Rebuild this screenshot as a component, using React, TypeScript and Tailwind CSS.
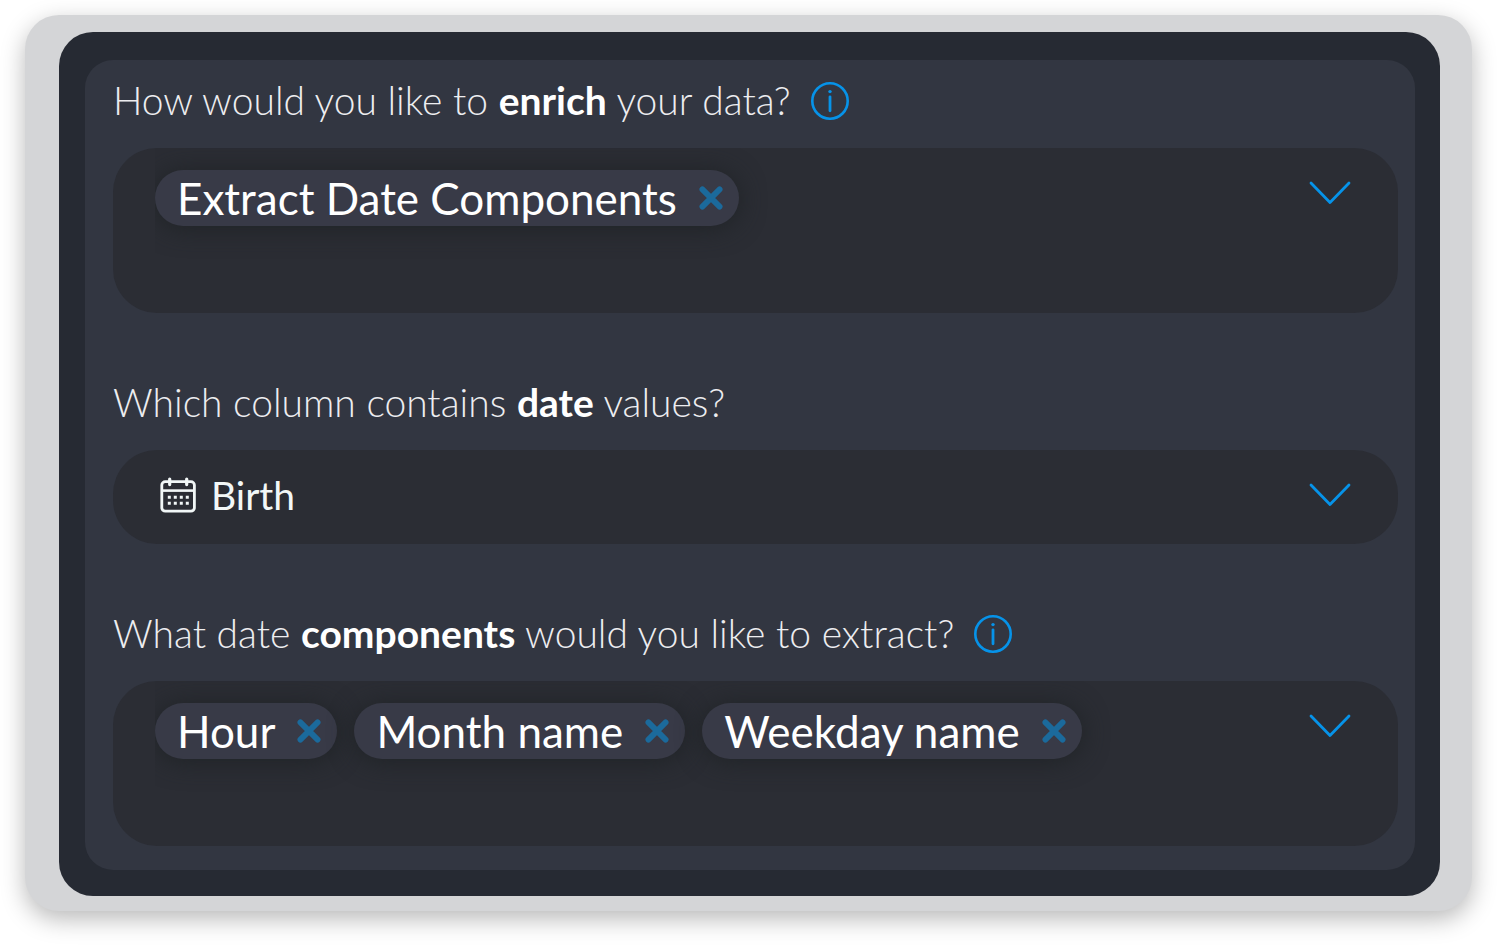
import { useState } from "react";
import type { ReactNode } from "react";

const COLUMNS = ["Birth"];

function InfoIcon() {
  return (
    <svg viewBox="0 0 38 38" className="size-[38px]" fill="none" aria-hidden="true">
      <circle cx="19" cy="19" r="17.7" stroke="currentColor" strokeWidth="2.6" />
      <circle cx="19" cy="9.6" r="1.7" fill="currentColor" />
      <path d="M19 14.8V28.8" stroke="currentColor" strokeWidth="2.8" strokeLinecap="round" />
    </svg>
  );
}

function ChevronIcon() {
  return (
    <svg viewBox="0 0 42 24" className="h-6 w-[42px]" fill="none" aria-hidden="true">
      <path
        d="M2 2L21 21.5L40 2"
        stroke="currentColor"
        strokeWidth="2.8"
        strokeLinecap="round"
        strokeLinejoin="round"
      />
    </svg>
  );
}

function CrossIcon() {
  return (
    <svg viewBox="0 0 24 24" className="size-6" fill="none" aria-hidden="true">
      <path d="M3.4 3.4L20.6 20.6M20.6 3.4L3.4 20.6" stroke="currentColor" strokeWidth="5.8" strokeLinecap="round" />
    </svg>
  );
}

function CalendarIcon() {
  return (
    <svg viewBox="0 0 36 36" className="size-9 shrink-0" fill="none" aria-hidden="true">
      <rect x="1.8" y="4.6" width="32.6" height="29.6" rx="3.5" stroke="currentColor" strokeWidth="2.8" />
      <path d="M2 13.6H34" stroke="currentColor" strokeWidth="2.6" />
      <path
        d="M9.7 2V7.6M26.7 2V7.6"
        stroke="currentColor"
        strokeWidth="3.2"
        strokeLinecap="round"
      />
      <path
        d="M7.8 20.3H28.8M7.8 26.3H28.8"
        stroke="currentColor"
        strokeWidth="3"
        strokeDasharray="3 3"
      />
    </svg>
  );
}

interface QuestionProps {
  id: string;
  htmlFor?: string;
  info?: string;
  children: ReactNode;
}

function Question({ id, htmlFor, info, children }: QuestionProps) {
  const textClass = "text-[39px] leading-12 font-light text-[#ededf0]";

  return (
    <div className="mb-6 flex min-h-12 items-center gap-5">
      {htmlFor ? (
        <label id={id} htmlFor={htmlFor} className={textClass}>
          {children}
        </label>
      ) : (
        <h2 id={id} className={textClass}>
          {children}
        </h2>
      )}
      {info && (
        <button type="button" aria-label={info} className="shrink-0 pt-0.5 text-[#0693e9]">
          <InfoIcon />
        </button>
      )}
    </div>
  );
}

interface ChipFieldProps {
  labelledBy: string;
  initial: string[];
}

function ChipField({ labelledBy, initial }: ChipFieldProps) {
  const [chips, setChips] = useState(initial);

  const removeChip = (chip: string) => {
    setChips((current) => current.filter((item) => item !== chip));
  };

  return (
    <div
      role="group"
      aria-labelledby={labelledBy}
      className="flex min-h-[165px] items-start gap-6 overflow-hidden rounded-[44px] bg-[#2b2d34] pt-[22px] pr-[47px] pb-6 pl-[42px]"
    >
      <ul className="flex flex-1 flex-wrap gap-x-[17px] gap-y-4 overflow-x-clip">
        {chips.map((chip) => (
          <li
            key={chip}
            className="flex h-14 items-center gap-[22px] rounded-full bg-[#383a47] pr-4 pl-[22px] shadow-[0_2px_26px_#1f2326]"
          >
            <span className="text-[44px] leading-14 text-white">{chip}</span>
            <button
              type="button"
              aria-label={`Remove ${chip}`}
              onClick={() => removeChip(chip)}
              className="text-[#1b6a9c]"
            >
              <CrossIcon />
            </button>
          </li>
        ))}
      </ul>
      <button type="button" aria-label="Show options" className="mt-[11px] shrink-0 text-[#0693e9]">
        <ChevronIcon />
      </button>
    </div>
  );
}

export default function App() {
  const [column, setColumn] = useState(COLUMNS[0]);

  return (
    <main className="bg-white px-[25px] pt-[15px] pb-[35px] font-['Lato',sans-serif]">
      <div className="rounded-[34px] bg-[#d4d5d7] pt-[17px] pr-8 pb-[15px] pl-[34px] shadow-[0_8px_24px_rgba(0,0,0,0.28)]">
        <div className="rounded-[34px] bg-[#262a33] pt-7 pr-[25px] pb-[26px] pl-[26px]">
          <form
            className="flex flex-col gap-[65px] rounded-[28px] bg-[#323641] pt-4 pr-[17px] pb-6 pl-7"
            onSubmit={(event) => event.preventDefault()}
          >
            <section>
              <Question id="enrich-label" info="About data enrichment">
                How would you like to <strong className="font-bold text-white">enrich</strong> your data?
              </Question>
              <ChipField labelledBy="enrich-label" initial={["Extract Date Components"]} />
            </section>

            <section>
              <Question id="column-label" htmlFor="date-column">
                Which column contains <strong className="font-bold text-white">date</strong> values?
              </Question>
              <div className="flex h-[94px] items-center rounded-[44px] bg-[#2b2d34] pr-[47px] pb-1 pl-[47px] text-[#f2f7f7]">
                <CalendarIcon />
                <select
                  id="date-column"
                  value={column}
                  onChange={(event) => setColumn(event.target.value)}
                  className="-mr-[42px] h-14 min-w-0 flex-1 appearance-none bg-transparent pr-[42px] pl-[15px] text-[39px] leading-14 outline-none"
                >
                  {COLUMNS.map((name) => (
                    <option key={name}>{name}</option>
                  ))}
                </select>
                <span className="pointer-events-none text-[#0693e9]">
                  <ChevronIcon />
                </span>
              </div>
            </section>

            <section>
              <Question id="components-label" info="About date components">
                What date <strong className="font-bold text-white">components</strong> would you like to extract?
              </Question>
              <ChipField labelledBy="components-label" initial={["Hour", "Month name", "Weekday name"]} />
            </section>
          </form>
        </div>
      </div>
    </main>
  );
}
